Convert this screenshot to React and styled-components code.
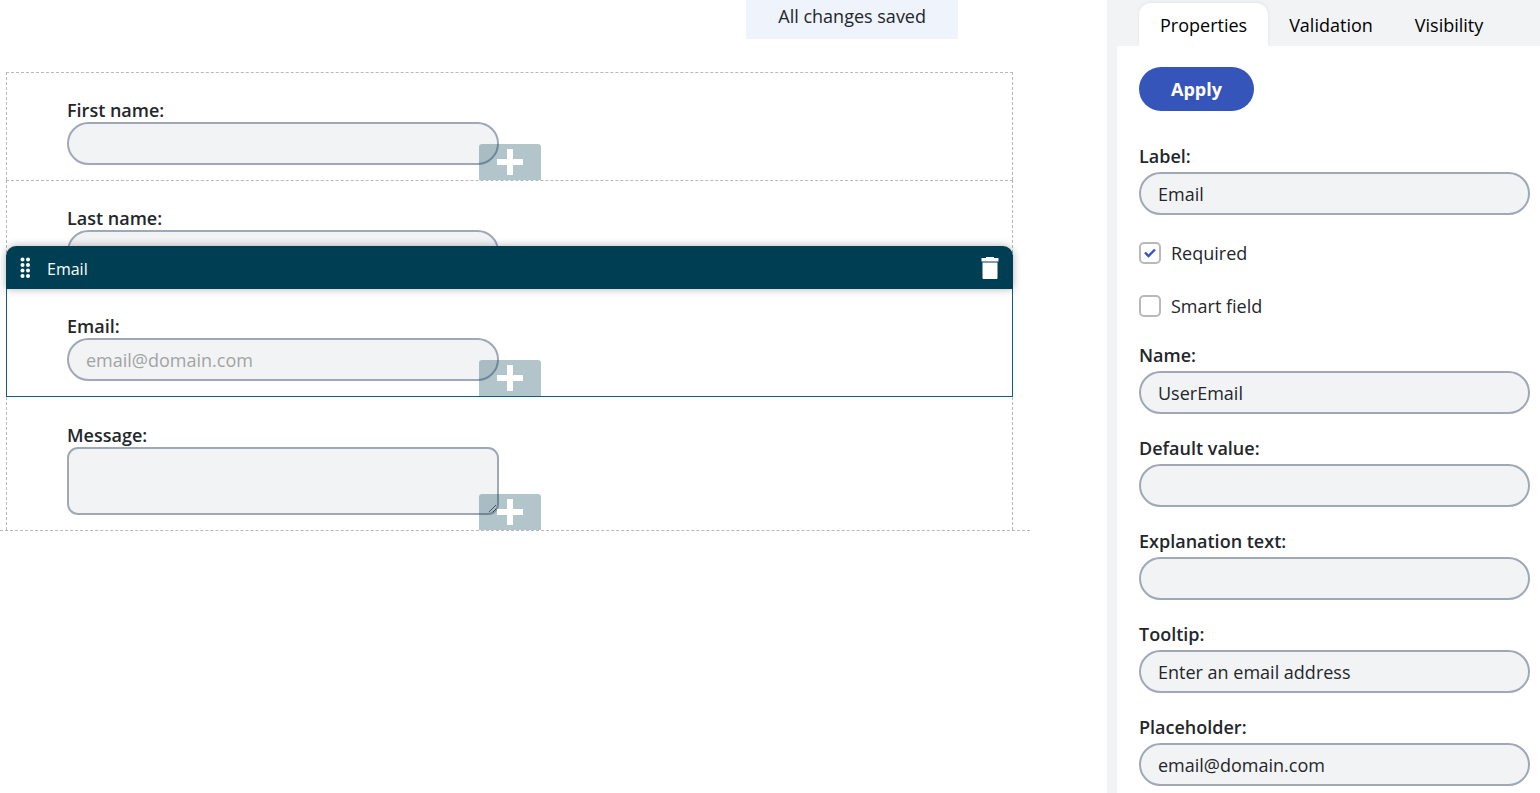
import React, { useState } from 'react';
import styled, { createGlobalStyle, css } from 'styled-components';

const GlobalStyle = createGlobalStyle`
  * {
    box-sizing: border-box;
  }
  body {
    margin: 0;
    background: #fff;
    color: #23272b;
    font-family: 'Open Sans', 'Noto Sans', sans-serif;
    font-size: 18px;
    line-height: 24px;
  }
  button, input, textarea {
    font: inherit;
    color: inherit;
  }
`;

const Page = styled.div`
  display: flex;
  min-height: 100vh;
  overflow: hidden;
`;

const Editor = styled.main`
  flex: 1;
  min-width: 0;
  padding-right: 77px;
`;

const SavedRow = styled.div`
  display: flex;
  justify-content: flex-end;
  padding-right: 72px;
  margin-bottom: 33px;
`;

const SavedBanner = styled.div`
  padding: 4px 32px 11px;
  background: #eef3fc;
`;

const FormZone = styled.div`
  padding: 0 17px 0 6px;
  border-bottom: 1px dashed #b9b9b9;
`;

const Row = styled.section`
  position: relative;
  padding: 25px 60px 15px;
  border: 1px dashed #b9b9b9;
  border-bottom: 0;

  ${({ $active }) => $active && css`
    border: 1px solid #0f5d8c;
  `}

  ${({ $afterActive }) => $afterActive && css`
    border-top-color: transparent;
  `}
`;

const RowHeader = styled.header`
  position: absolute;
  z-index: 2;
  left: -1px;
  right: -1px;
  bottom: 100%;
  display: flex;
  align-items: center;
  height: 43px;
  padding: 0 14px;
  border-radius: 10px 10px 0 0;
  background: #003f53;
  color: #fff;
  font-size: 16px;
  box-shadow: 0 0 8px rgba(0, 0, 0, 0.3);
`;

const RowTitle = styled.span`
  flex: 1;
  margin: 2px 16px 0;
`;

const IconButton = styled.button`
  display: flex;
  padding: 0;
  border: 0;
  background: none;
  cursor: pointer;
`;

const AddButton = styled.button`
  position: absolute;
  z-index: 1;
  left: 0;
  right: 0;
  bottom: 0;
  margin: 0 auto;
  display: flex;
  align-items: center;
  justify-content: center;
  width: 62px;
  height: 36px;
  padding: 0;
  border: 0;
  border-radius: 3px 3px 0 0;
  background: rgba(0, 63, 83, 0.3);
  cursor: pointer;
`;

const Label = styled.label`
  display: block;
  font-weight: 600;
`;

const fieldBox = css`
  display: block;
  width: 100%;
  border: 2px solid #a0a8b7;
  background: #f2f3f5;
  outline: none;
`;

const TextInput = styled.input`
  ${fieldBox}
  height: 43px;
  padding: 0 17px;
  border-radius: 22px;

  &::placeholder {
    color: #a3a3a3;
    opacity: 1;
  }
`;

const TextArea = styled.textarea`
  ${fieldBox}
  height: 68px;
  padding: 8px 17px;
  border-radius: 11px;
`;

const FieldBody = styled.div`
  max-width: 432px;
`;

const Sidebar = styled.aside`
  flex: 0 0 433px;
  padding-left: 10px;
  background: #f2f3f5;
`;

const Tabs = styled.div`
  display: flex;
  height: 46px;
  padding: 3px 0 0 22px;
`;

const Tab = styled.button`
  padding: 0 21px;
  border: 0;
  border-radius: 12px 12px 0 0;
  background: ${({ $active }) => ($active ? '#fff' : 'transparent')};
  box-shadow: ${({ $active }) => ($active ? '0 -1px 4px rgba(0, 0, 0, 0.06)' : 'none')};
  color: #000;
  cursor: pointer;
`;

const Panel = styled.form`
  position: relative;
  display: flex;
  flex-direction: column;
  gap: 22px;
  min-height: calc(100vh - 46px);
  padding: 21px 10px 7px 22px;
  background: #fff;
`;

const PropertyRow = styled.div`
  display: flex;
  flex-direction: column;
  gap: 4px;
`;

const ApplyButton = styled.button`
  align-self: flex-start;
  height: 44px;
  margin-bottom: 11px;
  padding: 0 32px;
  border: 0;
  border-radius: 22px;
  background: #3555bb;
  color: #fff;
  font-weight: 700;
  cursor: pointer;
`;

const CheckGroup = styled.div`
  display: flex;
  flex-direction: column;
  gap: 29px;
  padding: 4px 0 3px;
`;

const CheckLabel = styled.label`
  display: flex;
  align-items: center;
  gap: 10px;
`;

const Checkbox = styled.input`
  appearance: none;
  width: 22px;
  height: 22px;
  margin: 0;
  border: 2px solid #b9b9b9;
  border-radius: 5px;
  background: #fff;
`;

const CheckBoxWrap = styled.span`
  display: grid;

  > * {
    grid-area: 1 / 1;
    place-self: center;
  }
  svg {
    pointer-events: none;
  }
`;

const DragIcon = () => (
  <svg width="11" height="22" viewBox="0 0 11 22" fill="#fff" aria-hidden="true">
    {[2.5, 8, 13.5, 19].map((y) => (
      <React.Fragment key={y}>
        <circle cx="2.5" cy={y} r="2" />
        <circle cx="8" cy={y} r="2" />
      </React.Fragment>
    ))}
  </svg>
);

const TrashIcon = () => (
  <svg width="18" height="24" viewBox="0 0 18 24" fill="#fff" aria-hidden="true">
    <path d="M5 1h8v1h4.500v3.500H0.500V2H5z" />
    <path d="M1.500 6.500h15V22a1 1 0 0 1-1 1h-13a1 1 0 0 1-1-1z" />
  </svg>
);

const PlusIcon = () => (
  <svg width="26" height="26" viewBox="0 0 26 26" fill="#fff" aria-hidden="true">
    <path d="M10 0h6v10h10v6H16v10h-6V16H0v-6h10z" />
  </svg>
);

const TickIcon = () => (
  <svg width="14" height="12" viewBox="0 0 14 12" aria-hidden="true">
    <path d="M2 5.500L5.500 9L12 2.500" fill="none" stroke="#3a50c0" strokeWidth="2.400" />
  </svg>
);

const formRows = [
  { id: 'first-name', label: 'First name' },
  { id: 'last-name', label: 'Last name' },
  { id: 'email', label: 'Email', placeholder: 'email@domain.com' },
  { id: 'message', label: 'Message', multiline: true },
];

const properties = [
  { id: 'name', label: 'Name', value: 'UserEmail' },
  { id: 'default-value', label: 'Default value', value: '' },
  { id: 'explanation', label: 'Explanation text', value: '' },
  { id: 'tooltip', label: 'Tooltip', value: 'Enter an email address' },
  { id: 'placeholder', label: 'Placeholder', value: 'email@domain.com' },
];

const FormRow = ({ row, active, afterActive }) => (
  <Row $active={active} $afterActive={afterActive}>
    {active && (
      <RowHeader>
        <DragIcon />
        <RowTitle>{row.label}</RowTitle>
        <IconButton type="button" aria-label="Delete">
          <TrashIcon />
        </IconButton>
      </RowHeader>
    )}
    <FieldBody>
      <Label htmlFor={row.id}>{row.label}:</Label>
      {row.multiline ? (
        <TextArea id={row.id} />
      ) : (
        <TextInput id={row.id} type="text" placeholder={row.placeholder} />
      )}
    </FieldBody>
    <AddButton type="button" aria-label="Add field">
      <PlusIcon />
    </AddButton>
  </Row>
);

const Property = ({ id, label, value }) => (
  <PropertyRow>
    <Label htmlFor={`prop-${id}`}>{label}:</Label>
    <TextInput id={`prop-${id}`} type="text" defaultValue={value} />
  </PropertyRow>
);

const Check = ({ label, initial }) => {
  const [checked, setChecked] = useState(initial);
  return (
    <CheckLabel>
      <CheckBoxWrap>
        <Checkbox type="checkbox" checked={checked} onChange={(e) => setChecked(e.target.checked)} />
        {checked && <TickIcon />}
      </CheckBoxWrap>
      {label}
    </CheckLabel>
  );
};

const App = () => {
  const [tab, setTab] = useState('Properties');
  const activeIndex = 2;

  return (
    <Page>
      <GlobalStyle />
      <Editor>
        <SavedRow>
          <SavedBanner>All changes saved</SavedBanner>
        </SavedRow>
        <FormZone>
          {formRows.map((row, i) => (
            <FormRow
              key={row.id}
              row={row}
              active={i === activeIndex}
              afterActive={i === activeIndex + 1}
            />
          ))}
        </FormZone>
      </Editor>

      <Sidebar>
        <Tabs role="tablist">
          {['Properties', 'Validation', 'Visibility'].map((name) => (
            <Tab
              key={name}
              type="button"
              role="tab"
              aria-selected={tab === name}
              $active={tab === name}
              onClick={() => setTab(name)}
            >
              {name}
            </Tab>
          ))}
        </Tabs>
        <Panel onSubmit={(e) => e.preventDefault()}>
          <ApplyButton type="submit">Apply</ApplyButton>
          <Property id="label" label="Label" value="Email" />
          <CheckGroup>
            <Check label="Required" initial />
            <Check label="Smart field" initial={false} />
          </CheckGroup>
          {properties.map((p) => (
            <Property key={p.id} {...p} />
          ))}
        </Panel>
      </Sidebar>
    </Page>
  );
};

export default App;
